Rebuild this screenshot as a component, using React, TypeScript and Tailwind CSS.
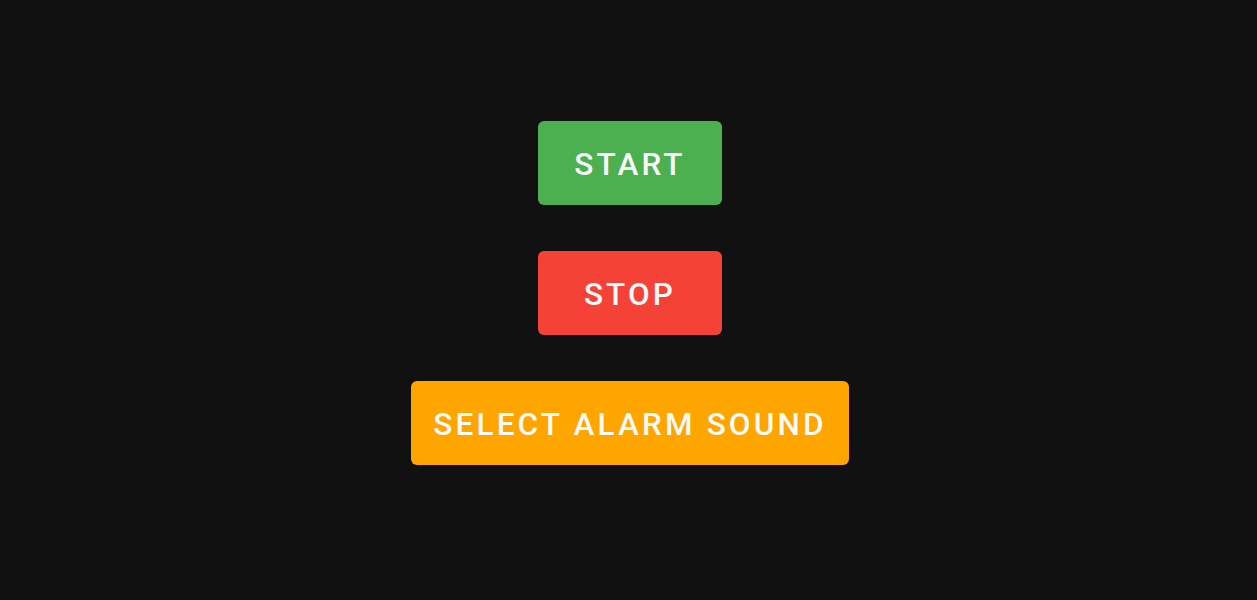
export default function App() {
  const btn =
    "min-w-[184px] h-[84px] px-[22px] pt-[4px] rounded-[6px] text-[#fafafa] text-[31.5px] font-medium tracking-[0.1em] leading-none";
  return (
    <div
      className="h-[600px] w-full bg-[#111111] flex flex-col items-center pt-[121px] pl-[3px] gap-[46px]"
      style={{ fontFamily: "Roboto, 'Noto Sans', sans-serif" }}
    >
      <button className={`${btn} bg-[#4caf50]`}>START</button>
      <button className={`${btn} bg-[#f44336]`}>STOP</button>
      <button className={`${btn} bg-[#ffa500]`}>SELECT ALARM SOUND</button>
    </div>
  );
}
